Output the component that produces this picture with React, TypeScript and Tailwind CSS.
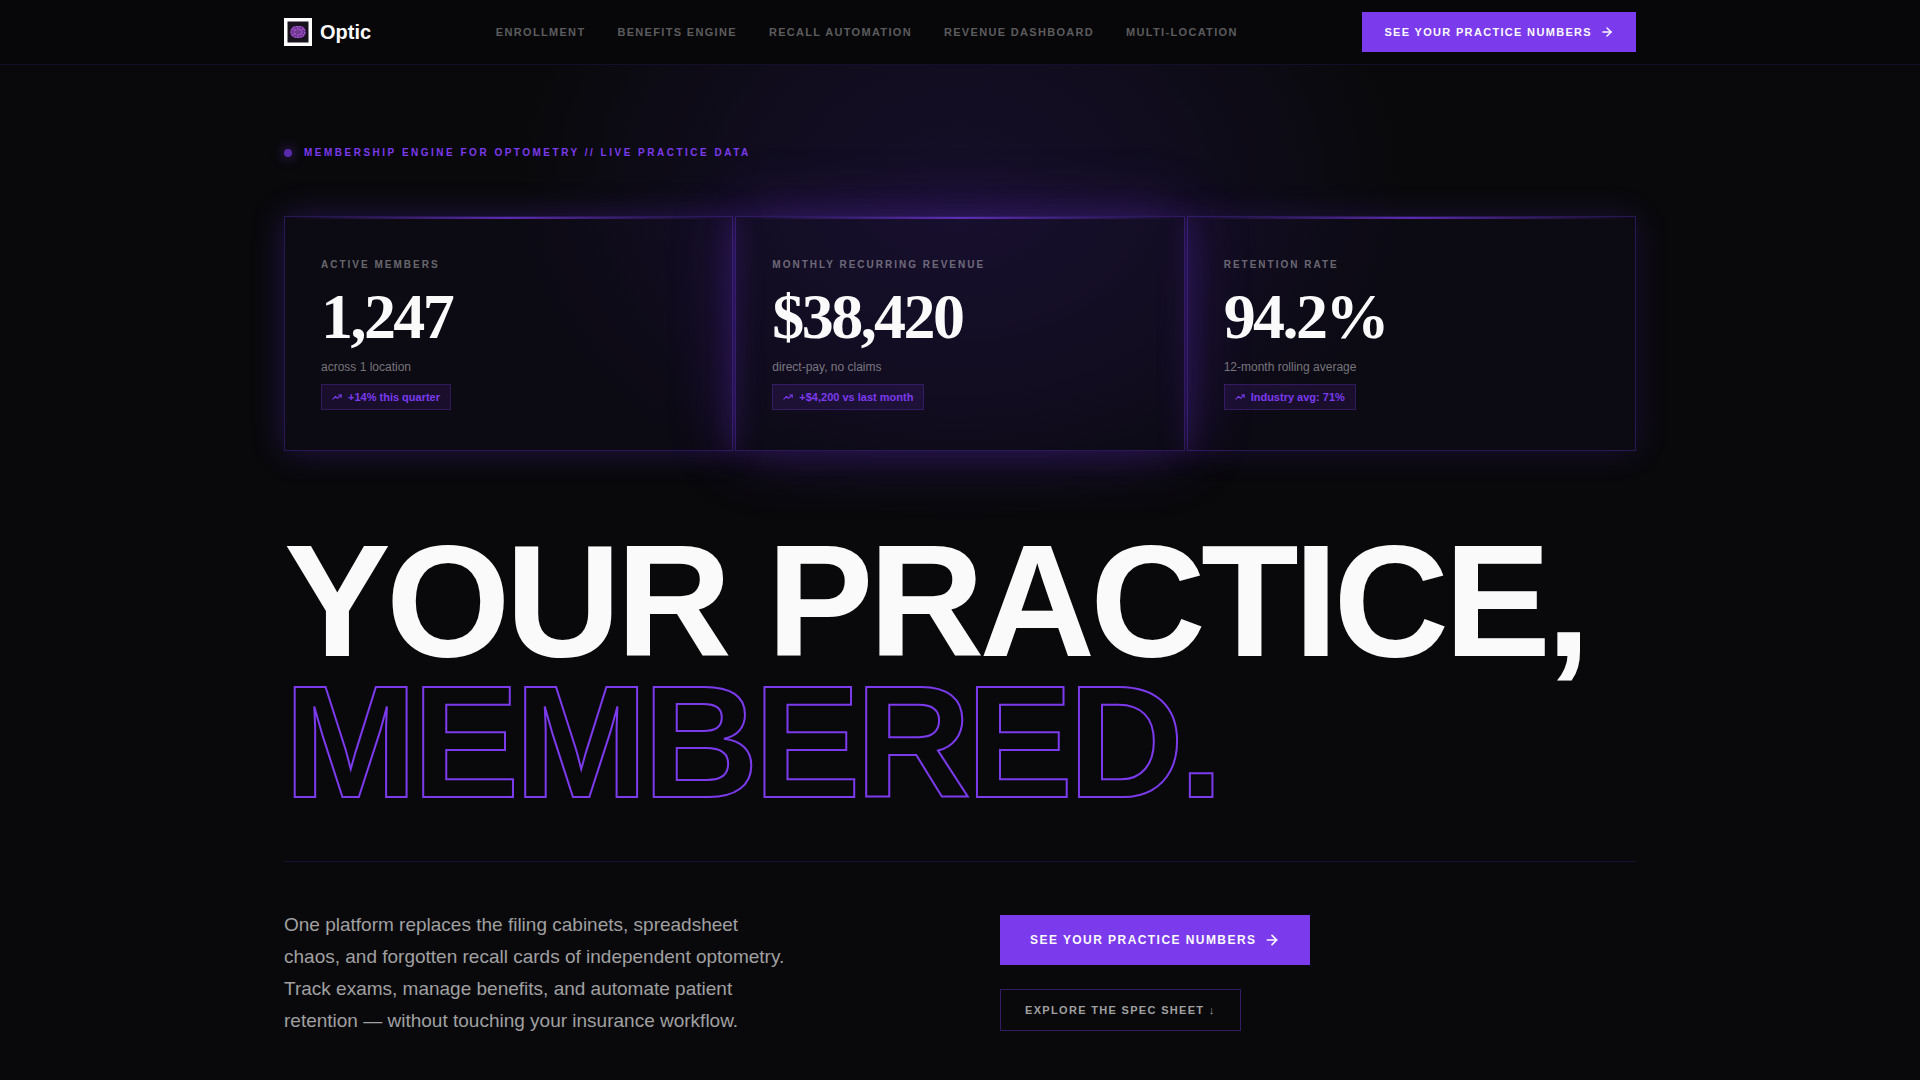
import { ArrowRight, TrendingUp } from 'lucide-react'
import clsx from 'clsx'

type Stat = {
  label: string
  value: string
  note: string
  badge: string
  glow: string
}

const navLinks = [
  { label: 'Enrollment', href: '#enrollment' },
  { label: 'Benefits Engine', href: '#benefits' },
  { label: 'Recall Automation', href: '#recall' },
  { label: 'Revenue Dashboard', href: '#revenue' },
  { label: 'Multi-Location', href: '#locations' },
]

const stats: Stat[] = [
  {
    label: 'Active Members',
    value: '1,247',
    note: 'across 1 location',
    badge: '+14% this quarter',
    glow: 'shadow-[0_0_30px_rgba(109,50,237,0.28)]',
  },
  {
    label: 'Monthly Recurring Revenue',
    value: '$38,420',
    note: 'direct-pay, no claims',
    badge: '+$4,200 vs last month',
    glow: 'shadow-[0_0_30px_rgba(115,50,237,0.18),0_0_60px_rgba(115,50,237,0.28)]',
  },
  {
    label: 'Retention Rate',
    value: '94.2%',
    note: '12-month rolling average',
    badge: 'Industry avg: 71%',
    glow: 'shadow-[0_0_30px_rgba(109,50,237,0.18)]',
  },
]

export default function App() {
  return (
    <div className="min-h-screen overflow-hidden bg-[#09090b] font-['Liberation_Sans',Arial,sans-serif] text-[#fafafa]">
      <Nav />
      <main className="relative isolate overflow-hidden">
        {/* glow behind the stats */}
        <div className="pointer-events-none absolute -top-[220px] left-1/2 -z-10 h-[680px] w-[900px] -translate-x-1/2 bg-[radial-gradient(ellipse_at_center,rgba(100,50,237,0.13)_0%,rgba(100,50,237,0.08)_35%,transparent_70%)]" />

        <div className="mx-auto max-w-[1400px] px-6 pt-20 pb-10">
          <div className="flex items-center gap-3">
            <span className="size-2 rounded-full bg-[#7c3aed] opacity-70 shadow-[0_0_12px_#7c3aed]" />
            <p className="text-[10px] leading-[15px] font-bold tracking-[0.25em] text-[#7c3aed] uppercase">
              Membership Engine for Optometry // Live Practice Data
            </p>
          </div>

          <section className="mt-14 grid gap-[2px] md:grid-cols-3">
            {stats.map((stat) => (
              <StatCard key={stat.label} stat={stat} />
            ))}
          </section>

          <h1 className="mt-[79px] text-[160px] leading-[141px] font-bold tracking-[-0.03em] uppercase">
            <span className="block">Your Practice,</span>
            <span className="block text-transparent [-webkit-text-stroke:2px_#7c3aed]">
              Membered.
            </span>
          </h1>

          <section className="mt-[49px] grid items-center gap-20 border-t border-[#6d3aed]/18 pt-[47px] md:grid-cols-2">
            <p className="max-w-[512px] text-[19px] leading-[32px] text-[#a0a0a2]">
              One platform replaces the filing cabinets, spreadsheet chaos, and
              forgotten recall cards of independent optometry. Track exams,
              manage benefits, and automate patient retention — without touching
              your insurance workflow.
            </p>
            <div className="flex flex-col items-start gap-6">
              <a
                href="#numbers"
                className="flex items-center gap-2 bg-[#7c3aed] px-[30px] py-[17px] text-[12px] leading-[16px] font-bold tracking-[0.12em] uppercase hover:bg-[#6d28d9]"
              >
                See Your Practice Numbers
                <ArrowRight size={16} strokeWidth={2.5} />
              </a>
              <a
                href="#spec"
                className="border border-[#6d3aed]/40 px-6 py-3 text-[11px] leading-[16px] font-bold tracking-[0.12em] text-[#a0a0a2] uppercase hover:border-[#7c3aed]"
              >
                Explore the Spec Sheet ↓
              </a>
            </div>
          </section>
        </div>
      </main>
    </div>
  )
}

function Nav() {
  return (
    <header className="border-b border-[#6d3aed]/15 bg-[#070709]">
      <div className="mx-auto flex h-16 max-w-[1400px] items-center justify-between px-6">
        <a href="#top" className="flex items-center gap-2">
          <LogoMark />
          <span className="text-[20px] leading-[28px] font-bold">Optic</span>
        </a>
        <nav className="flex items-center gap-8">
          {navLinks.map((link) => (
            <a
              key={link.href}
              href={link.href}
              className="text-[11px] leading-[16px] font-bold tracking-[0.12em] text-[#5c5c5e] uppercase hover:text-[#fafafa]"
            >
              {link.label}
            </a>
          ))}
        </nav>
        <a
          href="#numbers"
          className="flex items-center gap-2 bg-[#7c3aed] px-[22px] py-3 text-[11px] leading-[16px] font-bold tracking-[0.12em] uppercase hover:bg-[#6d28d9]"
        >
          See Your Practice Numbers
          <ArrowRight size={14} strokeWidth={2.5} />
        </a>
      </div>
    </header>
  )
}

function StatCard({ stat }: { stat: Stat }) {
  return (
    <article
      className={clsx(
        'relative flex flex-col items-start border border-[#6d3aed]/30 bg-[#6432ed]/4 px-9 py-10',
        stat.glow
      )}
    >
      <div className="absolute inset-x-0 top-0 h-[2px] bg-linear-to-r from-transparent via-[#7c3aed] to-transparent opacity-70" />
      <h2 className="text-[10px] leading-[15px] font-bold tracking-[0.2em] text-[#fafafa]/40 uppercase">
        {stat.label}
      </h2>
      <p className="mt-[13px] font-['Liberation_Serif',serif] text-[64px] leading-[64px] font-bold tracking-[-0.04em]">
        {stat.value}
      </p>
      <p className="mt-[9px] text-[12px] leading-[18px] text-[#fafafa]/45">
        {stat.note}
      </p>
      <span className="mt-2 flex items-center gap-[6px] border border-[#7c3aed]/25 bg-[#7c3aed]/12 px-[10px] py-1 text-[11px] leading-[16px] font-bold text-[#7c3aed]">
        <TrendingUp size={10} strokeWidth={2.5} />
        {stat.badge}
      </span>
    </article>
  )
}

function LogoMark() {
  return (
    <svg viewBox="0 0 28 28" className="size-7" aria-hidden="true">
      <rect width="28" height="28" fill="#ffffff" />
      <rect x="3.500" y="3.500" width="21" height="21" fill="#17121c" />
      <rect x="6.500" y="8" width="15" height="12" rx="5" fill="#6b3190" />
      <g fill="none" stroke="#b565d8" strokeWidth="1">
        <ellipse cx="14" cy="14" rx="7" ry="5.500" strokeDasharray="2 1" />
        <ellipse cx="14" cy="14" rx="4" ry="3" strokeDasharray="1.500 1" />
        <path d="M8 10.500l12 7M20 10.500l-12 7M14 8.500v11" strokeWidth="0.600" />
      </g>
      <circle cx="14" cy="14" r="1.500" fill="#3a1a55" />
      <circle cx="14" cy="14" r="0.700" fill="#d59af0" />
    </svg>
  )
}
